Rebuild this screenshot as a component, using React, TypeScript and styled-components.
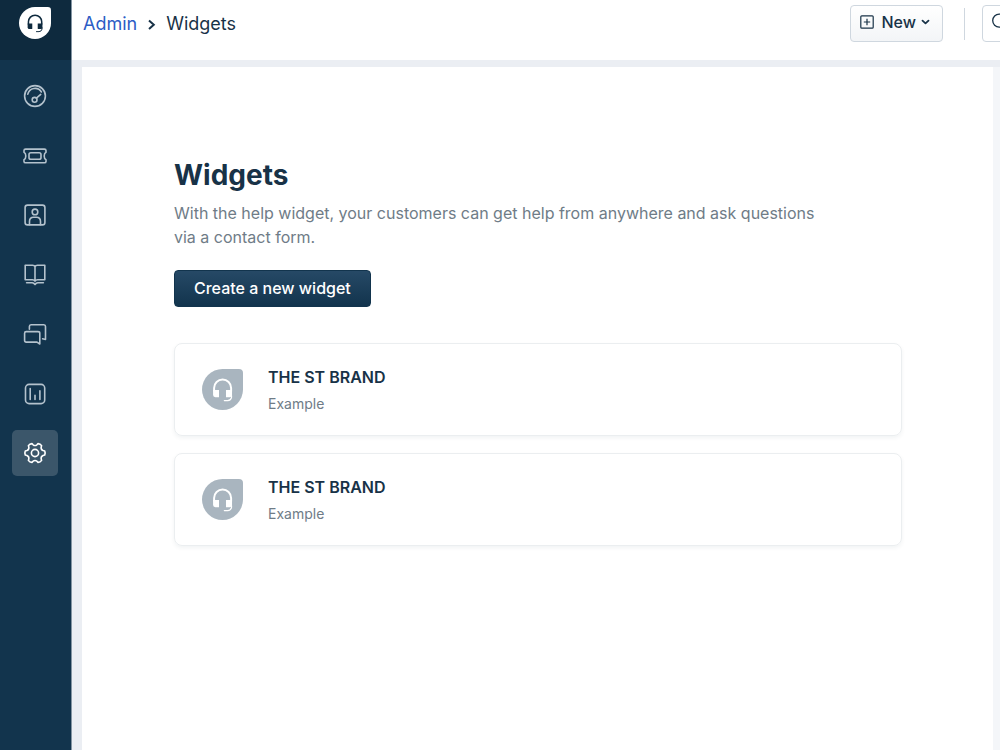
import React from "react";
import styled, { createGlobalStyle } from "styled-components";

const GlobalStyle = createGlobalStyle`
  *, *::before, *::after { box-sizing: border-box; }
  body {
    margin: 0;
    overflow: hidden;
    background: #ebeef3;
    color: #183247;
    font-family: Inter, "Liberation Sans", sans-serif;
  }
  button { font-family: inherit; cursor: pointer; }
`;

const Shell = styled.div`
  display: flex;
  min-height: 100vh;
  overflow: hidden;
`;

const Sidebar = styled.aside`
  flex: 0 0 72px;
  border-right: 1px solid #8495a3;
  background: #12344d;
`;

const Brand = styled.a`
  display: flex;
  justify-content: center;
  height: 60px;
  padding: 7px 1px 0 0;
  background: #0e2a3e;
`;

const NavList = styled.nav`
  display: flex;
  flex-direction: column;
  justify-content: space-between;
  height: 403px;
  margin-top: 13px;
  padding-left: 12px;
`;

const NavItem = styled.a<{ $active?: boolean }>`
  display: flex;
  align-items: center;
  justify-content: center;
  width: 46px;
  height: 46px;
  border-radius: 5px;
  color: ${(p) => (p.$active ? "#ffffff" : "#b4c2cd")};
  background: ${(p) => (p.$active ? "#3b566a" : "transparent")};
`;

const NavIcon = styled.svg`
  width: 24px;
  height: 24px;
  fill: none;
  stroke: currentColor;
  stroke-width: 1.6;
  stroke-linecap: round;
  stroke-linejoin: round;
`;

const Page = styled.div`
  display: flex;
  flex: 1;
  flex-direction: column;
  min-width: 0;
`;

const TopBar = styled.header`
  display: flex;
  align-items: flex-start;
  justify-content: space-between;
  height: 60px;
  padding-left: 11px;
  background: #ffffff;
`;

const Breadcrumb = styled.nav`
  display: flex;
  align-items: center;
  gap: 10px;
  height: 48px;
  font-size: 18px;
  line-height: 24px;
`;

const CrumbLink = styled.a`
  color: #2c5cc5;
  text-decoration: none;
`;

const Actions = styled.div`
  display: flex;
  align-items: center;
  padding-top: 5px;
`;

const OutlineButton = styled.button`
  display: flex;
  align-items: center;
  height: 37px;
  padding: 0 12px 3px 9px;
  border: 1px solid #cfd7df;
  border-radius: 4px;
  background: linear-gradient(#ffffff, #f3f5f7);
  color: #183247;
  font-size: 16px;
  font-weight: 500;
  line-height: 20px;
`;

const ButtonLabel = styled.span`
  margin: 0 5px 0 8px;
`;

const Divider = styled.span`
  width: 1px;
  height: 32px;
  margin: 0 17px 0 21px;
  background: #cfd7df;
`;

const SearchButton = styled(OutlineButton)`
  width: 110px;
  margin-right: -92px;
  background: #ffffff;
`;

const Panel = styled.main`
  flex: 1;
  margin: 7px 0 0 10px;
  padding: 90px 91px 40px 92px;
  border-right: 7px solid #f4f6f9;
  background: #ffffff;
`;

const Title = styled.h1`
  margin: 0;
  font-size: 28px;
  font-weight: 700;
  line-height: 36px;
`;

const Description = styled.p`
  max-width: 650px;
  margin: 8px 0 21px;
  color: #6f7c87;
  font-size: 16px;
  line-height: 24px;
`;

const PrimaryButton = styled.button`
  height: 37px;
  padding: 0 19px 2px;
  border: 1px solid #12344d;
  border-radius: 4px;
  background: linear-gradient(#264966, #12344d);
  color: #ffffff;
  font-size: 16px;
  font-weight: 500;
  line-height: 20px;
`;

const WidgetList = styled.ul`
  display: flex;
  flex-direction: column;
  gap: 17px;
  margin: 36px 0 0;
  padding: 0;
  list-style: none;
`;

const WidgetCard = styled.li`
  display: flex;
  align-items: center;
  gap: 25px;
  height: 93px;
  padding: 0 27px 1px;
  border: 1px solid #ebeef0;
  border-radius: 8px;
  box-shadow: 0 2px 4px rgba(24, 50, 71, 0.06);
`;

const WidgetName = styled.h2`
  margin: 0 0 5px;
  font-size: 16px;
  font-weight: 600;
  line-height: 24px;
`;

const WidgetNote = styled.p`
  margin: 0;
  color: #6f7c87;
  font-size: 14px;
  line-height: 20px;
`;

function HeadsetLogo({ size, fill, mark }: { size: number; fill: string; mark: string }) {
  return (
    <svg width={size} height={size} viewBox="0 0 40 40" aria-hidden="true">
      <path d="M20 0H36Q40 0 40 4V20A20 20 0 1 1 20 0Z" fill={fill} />
      <path d="M11.8 22V18.5A8.3 8.3 0 0 1 28.4 18.5V22" fill="none" stroke={mark} strokeWidth="1.9" />
      <path d="M10.8 20.6H16.6V27.6H13Q10.8 27.6 10.8 25.2Z" fill={mark} />
      <path d="M23.4 20.6H29.3V25.2Q29.3 27.6 27.2 27.6H23.4Z" fill={mark} />
      <path d="M28.8 26V27.6Q28.2 30.7 25 30.8H21.8" fill="none" stroke={mark} strokeWidth="1.2" strokeLinecap="round" />
    </svg>
  );
}

// Six-toothed cog outline centred in a 24-unit box.
const gearPath = (() => {
  const at = (r: number, deg: number) => {
    const a = (deg * Math.PI) / 180;
    return `${(12 + r * Math.cos(a)).toFixed(2)} ${(12 + r * Math.sin(a)).toFixed(2)}`;
  };
  let d = "";
  for (let i = 0; i < 6; i++) {
    const a = i * 60;
    d += `${i ? "L" : "M"}${at(9.9, a - 12)}Q${at(10.6, a)} ${at(9.9, a + 12)}L${at(8.4, a + 17)}Q${at(6.8, a + 30)} ${at(8.4, a + 43)}`;
  }
  return d + "Z";
})();

const navigation = [
  {
    label: "Dashboard",
    icon: (
      <>
        <circle cx="12" cy="12" r="10.4" />
        <path d="M4.8 10.2A7.4 7.4 0 0 1 18.4 8M13.4 14.1L17.7 10.4" />
        <circle cx="11.6" cy="15.8" r="2.4" />
      </>
    ),
  },
  {
    label: "Tickets",
    icon: (
      <>
        <path d="M2.6 5.1H21.4Q23 5.1 23 6.5V8.2Q21.2 9 21.2 12T23 15.8V17.4Q23 18.8 21.4 18.8H2.6Q1 18.8 1 17.4V15.8Q2.8 15 2.8 12T1 8.2V6.5Q1 5.1 2.6 5.1Z" />
        <rect x="6" y="8.8" width="12" height="6.4" rx="1.8" />
      </>
    ),
  },
  {
    label: "Contacts",
    icon: (
      <>
        <rect x="2.1" y="2.1" width="19.8" height="19.8" rx="2.4" />
        <circle cx="12" cy="8.9" r="2.8" />
        <path d="M6.5 21.7V18.5Q6.5 14.2 10.5 14.2H13.5Q17.5 14.2 17.5 18.5V21.7" />
      </>
    ),
  },
  {
    label: "Solutions",
    icon: (
      <>
        <path d="M12 3.8Q11.4 2.3 9.6 2.3H2.2V16.8H9.4Q11.4 16.8 12 18.1Q12.6 16.8 14.6 16.8H21.8V2.3H14.4Q12.6 2.3 12 3.8V18" />
        <path d="M3.6 19.7H9.2Q10.9 19.8 12 21.5Q13.1 19.8 14.8 19.7H20.4" />
      </>
    ),
  },
  {
    label: "Forums",
    icon: (
      <>
        <path d="M3.2 9.6H15Q16.8 9.6 16.8 11.2V22L14 20.1H3.2Q1.6 20.1 1.6 18.5V11.2Q1.6 9.6 3.2 9.6Z" />
        <path d="M6.4 7.2V4.4Q6.4 2.7 8 2.7H20.9Q22.5 2.7 22.5 4.4V17.5L19.6 16.7" />
      </>
    ),
  },
  {
    label: "Analytics",
    icon: (
      <>
        <rect x="2.5" y="2.4" width="19.2" height="19.2" rx="3.6" />
        <path d="M7.2 6.6V17.4M12 13.2V17.4M16.9 8.8V17.4" />
      </>
    ),
  },
  {
    label: "Admin",
    active: true,
    icon: (
      <>
        <path d={gearPath} />
        <circle cx="12" cy="12" r="3.6" />
      </>
    ),
  },
];

const widgets = [
  { id: 1, name: "THE ST BRAND", note: "Example" },
  { id: 2, name: "THE ST BRAND", note: "Example" },
];

export default function App() {
  return (
    <>
      <GlobalStyle />
      <Shell>
        <Sidebar>
          <Brand href="#home" aria-label="Home">
            <HeadsetLogo size={32} fill="#ffffff" mark="#0e2a3e" />
          </Brand>
          <NavList aria-label="Main">
            {navigation.map((item) => (
              <NavItem key={item.label} href="#" aria-label={item.label} $active={item.active}>
                <NavIcon viewBox="0 0 24 24">{item.icon}</NavIcon>
              </NavItem>
            ))}
          </NavList>
        </Sidebar>
        <Page>
          <TopBar>
            <Breadcrumb aria-label="Breadcrumb">
              <CrumbLink href="#admin">Admin</CrumbLink>
              <svg width="9" height="12" viewBox="0 0 9 12" fill="none" stroke="#183247" strokeWidth="2" aria-hidden="true">
                <path d="M2 2.5L6.8 6.8L2 11.1" />
              </svg>
              <span>Widgets</span>
            </Breadcrumb>
            <Actions>
              <OutlineButton type="button">
                <svg width="14" height="14" viewBox="0 0 14 14" fill="none" stroke="#183247" strokeWidth="1.2" aria-hidden="true">
                  <rect x="0.8" y="0.8" width="12.4" height="12.4" rx="1" />
                  <path d="M7 3.8V10.2M3.8 7H10.2" />
                </svg>
                <ButtonLabel>New</ButtonLabel>
                <svg width="9" height="6" viewBox="0 0 9 6" fill="none" stroke="#183247" strokeWidth="1.8" strokeLinecap="round" strokeLinejoin="round" aria-hidden="true">
                  <path d="M1.5 1.6L4.5 4.4L7.5 1.6" />
                </svg>
              </OutlineButton>
              <Divider />
              <SearchButton type="button" aria-label="Search">
                <svg width="18" height="18" viewBox="0 0 18 18" fill="none" stroke="#183247" strokeWidth="1.3" aria-hidden="true">
                  <circle cx="7.2" cy="7.6" r="6.5" />
                  <path d="M12 12.4L17 17.4" />
                </svg>
              </SearchButton>
            </Actions>
          </TopBar>
          <Panel>
            <Title>Widgets</Title>
            <Description>
              With the help widget, your customers can get help from anywhere and ask questions via a contact form.
            </Description>
            <PrimaryButton type="button">Create a new widget</PrimaryButton>
            <WidgetList>
              {widgets.map((widget) => (
                <WidgetCard key={widget.id}>
                  <HeadsetLogo size={41} fill="#a9b5bf" mark="#ffffff" />
                  <div>
                    <WidgetName>{widget.name}</WidgetName>
                    <WidgetNote>{widget.note}</WidgetNote>
                  </div>
                </WidgetCard>
              ))}
            </WidgetList>
          </Panel>
        </Page>
      </Shell>
    </>
  );
}
